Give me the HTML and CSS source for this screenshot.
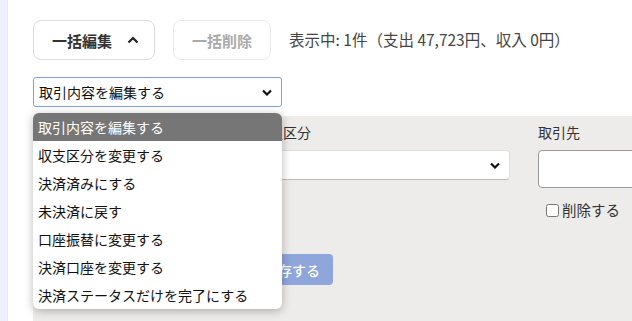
FILE: index.html
```html
<!DOCTYPE html>
<html lang="ja">
<head>
    <meta charset="utf-8">
    <link rel="stylesheet" href="styles.css">
</head>
<body>
<div class="app">
    <aside class="rail"></aside>

    <main class="main">
        <div class="toolbar">
            <button class="btn btn-toggle">
                一括編集
                <svg width="12" height="8" viewBox="0 0 12 8"><path d="M1.5 6.5 6 2l4.5 4.5" fill="none" stroke="#222" stroke-width="2.2"/></svg>
            </button>
            <button class="btn" disabled>一括削除</button>
            <span class="summary">表示中: 1件（支出 47,723円、収入 0円）</span>
        </div>

        <div class="bulk">
            <div class="action">
                <div class="select select-focus">
                    <span>取引内容を編集する</span>
                    <svg width="10" height="7" viewBox="0 0 10 7"><path d="M1 1.5 5 5.5l4-4" fill="none" stroke="#111" stroke-width="2.2"/></svg>
                </div>
                <ul class="menu">
                    <li class="active">取引内容を編集する</li>
                    <li>収支区分を変更する</li>
                    <li>決済済みにする</li>
                    <li>未決済に戻す</li>
                    <li>口座振替に変更する</li>
                    <li>決済口座を変更する</li>
                    <li>決済ステータスだけを完了にする</li>
                </ul>
            </div>

            <div class="panel">
                <div class="field"></div>
                <div class="field">
                    <label>収支区分</label>
                    <div class="select">
                        <span></span>
                        <svg width="10" height="7" viewBox="0 0 10 7"><path d="M1 1.5 5 5.5l4-4" fill="none" stroke="#111" stroke-width="2.2"/></svg>
                    </div>
                </div>
                <div class="field">
                    <label>取引先</label>
                    <input type="text" class="text-input">
                    <label class="check"><input type="checkbox">削除する</label>
                </div>
                <div class="actions">
                    <button class="btn-save" disabled>保存する</button>
                </div>
            </div>
        </div>
    </main>
</div>
</body>
</html>
```

FILE: styles.css
```css
body {
    font-family: "Noto Sans CJK JP", "Noto Sans", sans-serif;
    margin: 0;
    padding: 0;
    color: #333;
    overflow: hidden;
    background: #fff;
}

.app {
    display: flex;
    height: 321px;
}

.rail {
    width: 7px;
    flex-shrink: 0;
    background: #eef1fc;
    border-right: 1px solid #e4e9f8;
}

.main {
    flex: 1;
    padding: 20px 0 0 25px;
    min-width: 0;
}

.toolbar {
    display: flex;
    align-items: center;
    gap: 18px;
}

.btn {
    height: 40px;
    padding: 0 18px;
    border: 1px solid #dcdcdc;
    border-radius: 8px;
    background: #fff;
    font-family: inherit;
    font-size: 15px;
    font-weight: bold;
    color: #333;
    display: flex;
    align-items: center;
    gap: 15px;
}

.btn:disabled {
    color: #aaa;
    border-color: #eaeaea;
}

.btn-toggle {
    padding-right: 15px;
}

.summary {
    font-size: 15.5px;
    color: #444;
    margin-top: -2px;
    white-space: nowrap;
}

.bulk {
    margin-top: 17px;
    position: relative;
}

.action {
    position: relative;
    width: 249px;
    z-index: 2;
}

.select {
    height: 28px;
    border: 1px solid #e0dedc;
    border-bottom-color: #bbb;
    border-radius: 4px;
    background: #fff;
    display: flex;
    align-items: center;
    justify-content: space-between;
    padding: 0 9px 0 5px;
    font-size: 14px;
    color: #111;
}

.select-focus {
    border-color: #7f9fe4;
    border-radius: 3px;
}

.menu {
    position: absolute;
    top: 36px;
    left: 0;
    width: 249px;
    margin: 0;
    padding: 0;
    list-style: none;
    background: #fff;
    border-radius: 6px;
    overflow: hidden;
    box-shadow: 0 2px 10px rgba(0, 0, 0, 0.28);
}

.menu li {
    height: 28px;
    line-height: 28px;
    padding-left: 5px;
    font-size: 14px;
    color: #111;
    white-space: nowrap;
}

.menu li.active {
    background: #767676;
    color: #fff;
}

.panel {
    margin-top: 9px;
    width: 700px;
    height: 220px;
    background: #eeecea;
    padding: 6px 14px 0;
    display: grid;
    grid-template-columns: 180px 255px 1fr;
    column-gap: 28px;
    align-content: start;
}

.field label {
    display: block;
    font-size: 14px;
    line-height: 20px;
    margin-bottom: 8px;
    color: #333;
}

.field .select {
    height: 28px;
}

.text-input {
    box-sizing: border-box;
    width: 100%;
    height: 38px;
    border: 1px solid #999;
    border-radius: 4px;
    background: #fff;
}

.field .check {
    display: flex;
    align-items: center;
    gap: 3px;
    margin: 12px 0 0 8px;
    font-size: 14.5px;
}

.check input {
    margin: 0;
    width: 13px;
    height: 13px;
}

.actions {
    grid-column: 2;
    margin-top: 34px;
}

.btn-save {
    height: 31px;
    padding: 0 13px 0 9px;
    border: none;
    border-radius: 4px;
    background: #8fa6dc;
    color: #fff;
    font-family: inherit;
    font-size: 14px;
    font-weight: 500;
}
```
